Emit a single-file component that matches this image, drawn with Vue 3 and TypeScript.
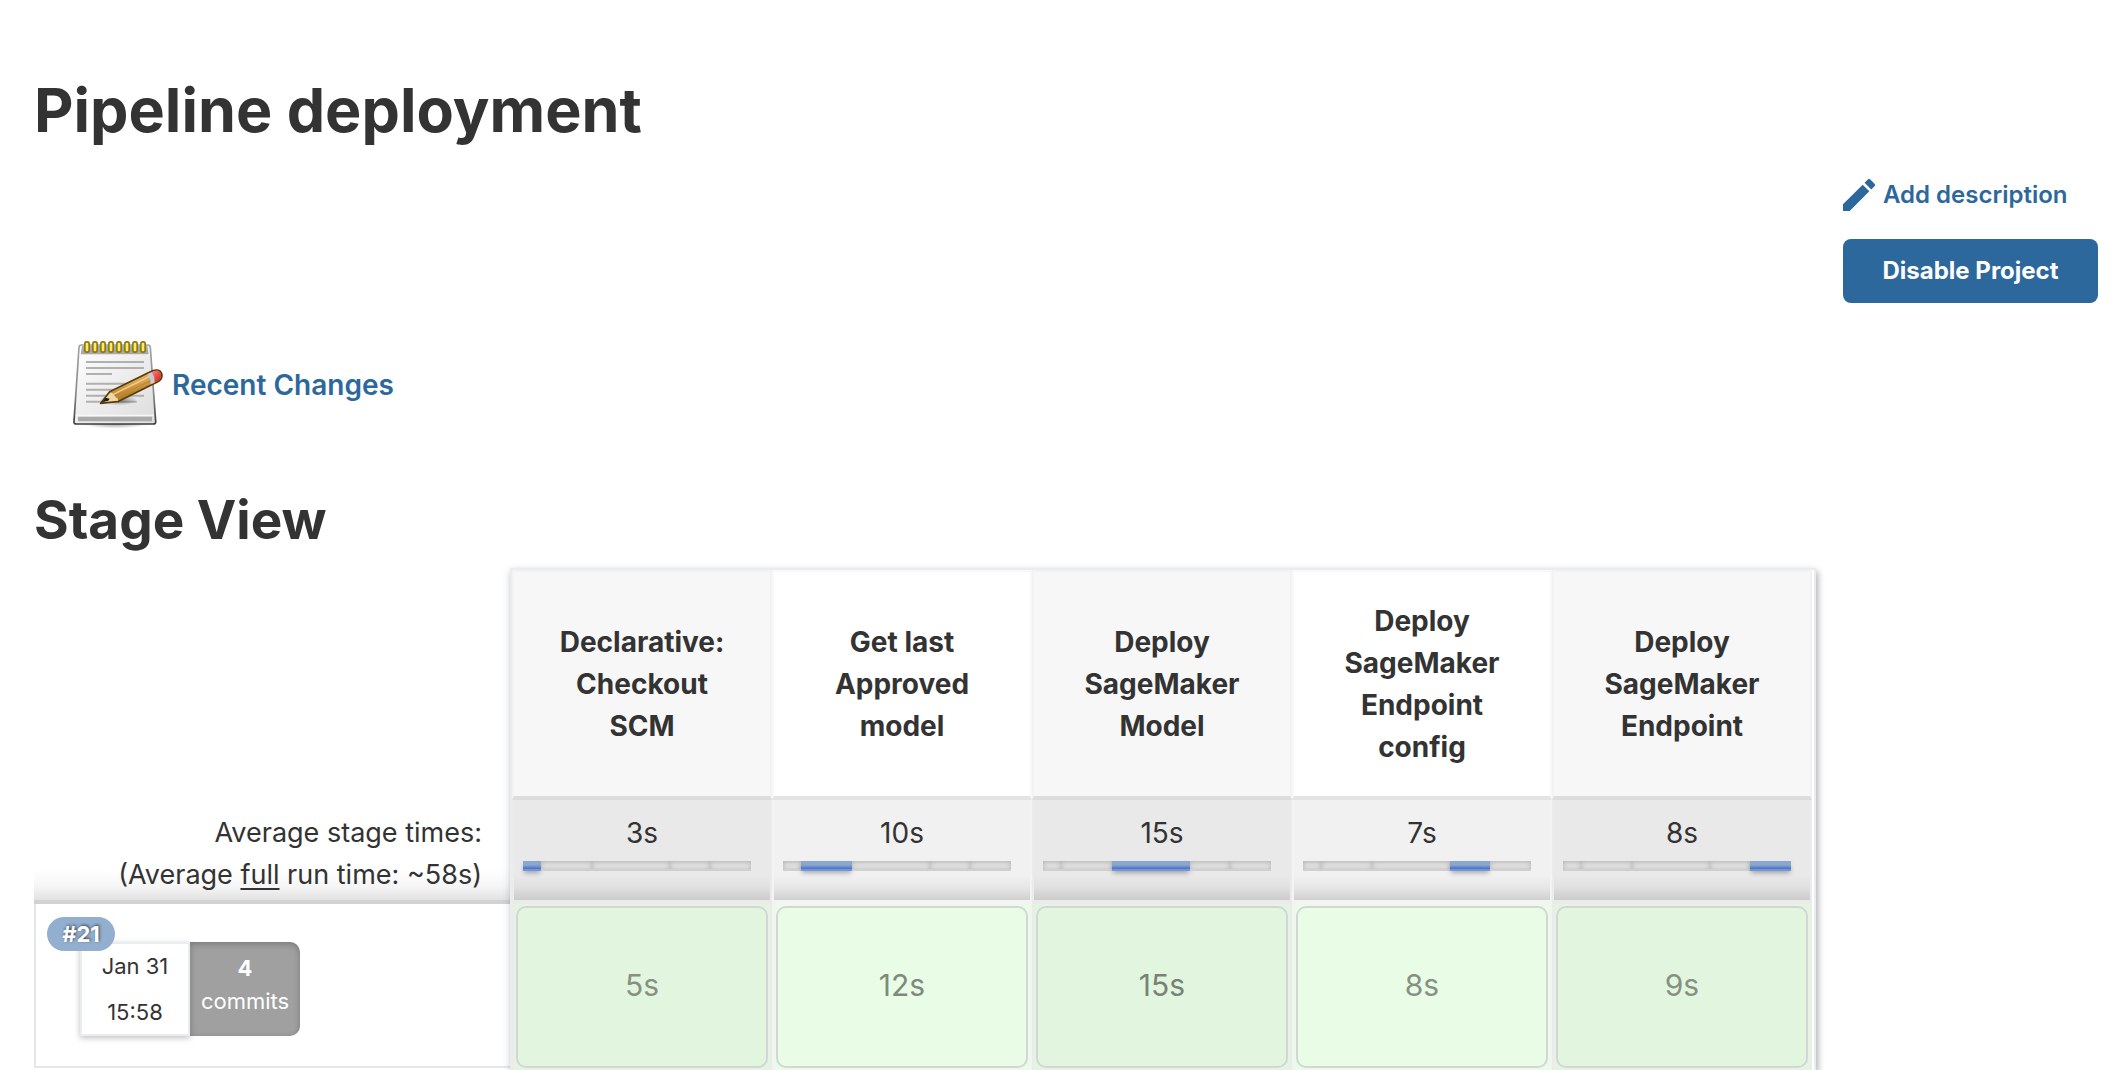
<script setup lang="ts">
interface Stage {
  name: string
  average: string
  share: number
  latest: string
  scale: 'short' | 'medium' | 'long'
}

const stages: Stage[] = [
  { name: 'Declarative: Checkout SCM', average: '3s', share: 18, latest: '5s', scale: 'short' },
  { name: 'Get last Approved model', average: '10s', share: 51, latest: '12s', scale: 'medium' },
  { name: 'Deploy SageMaker Model', average: '15s', share: 78, latest: '15s', scale: 'long' },
  { name: 'Deploy SageMaker Endpoint config', average: '7s', share: 40, latest: '8s', scale: 'short' },
  { name: 'Deploy SageMaker Endpoint', average: '8s', share: 41, latest: '9s', scale: 'short' },
]

const rings = [72, 96, 120, 144, 168, 192, 216, 240]
</script>

<template>
  <main class="page">
    <h1>Pipeline deployment</h1>

    <div class="actions">
      <div class="actions-inner">
        <a class="describe" href="#">
          <svg viewBox="3 3 18 18" width="32" height="32" aria-hidden="true">
            <path
              fill="currentColor"
              d="M3 17.25V21h3.75L17.81 9.94l-3.75-3.75L3 17.25zM20.71 7.04a1 1 0 0 0 0-1.41l-2.34-2.34a1 1 0 0 0-1.41 0l-1.83 1.83 3.75 3.75 1.83-1.83z"
            />
          </svg>
          <span>Add description</span>
        </a>
        <button class="disable" type="button">Disable Project</button>
      </div>
    </div>

    <a class="changes" href="#">
      <svg viewBox="30 21 288 288" width="96" height="96" aria-hidden="true">
        <defs>
          <linearGradient id="paper" x1="0" y1="0" x2="1" y2="1">
            <stop offset="0" stop-color="#ffffff" />
            <stop offset="1" stop-color="#dcdcdc" />
          </linearGradient>
          <linearGradient id="outline" x1="0" y1="0" x2="0" y2="1">
            <stop offset="0" stop-color="#a4a4a4" />
            <stop offset="0.6" stop-color="#8a8a8a" />
            <stop offset="1" stop-color="#3c3c3c" />
          </linearGradient>
          <linearGradient id="wood" x1="0" y1="0" x2="0.35" y2="1">
            <stop offset="0.2" stop-color="#e9b96e" />
            <stop offset="0.5" stop-color="#d9a453" />
            <stop offset="0.8" stop-color="#b5802c" />
          </linearGradient>
          <linearGradient id="rubber" x1="0" y1="0" x2="1" y2="1">
            <stop offset="0.1" stop-color="#ff7d7d" />
            <stop offset="0.8" stop-color="#d92b2b" />
          </linearGradient>
          <radialGradient id="shade">
            <stop offset="0" stop-color="#000" stop-opacity="0.45" />
            <stop offset="1" stop-color="#000" stop-opacity="0" />
          </radialGradient>
        </defs>
        <ellipse cx="165" cy="278" rx="105" ry="18" fill="url(#shade)" />
        <path
          d="M64 45H264Q270 45 271 52L287 274Q288 282 280 282H49Q41 282 42 274L57 52Q58 45 64 45Z"
          fill="url(#paper)"
          stroke="url(#outline)"
          stroke-width="5"
        />
        <path d="M66 48H262L266 74H62Z" fill="#a9a9a9" />
        <path d="M58 74H270" stroke="#fff" stroke-width="2" />
        <path d="M47 256H282" stroke="#f8f8f8" stroke-width="4" />
        <path d="M54 260H276V274H54Z" fill="#aaa" />
        <path
          d="M78 96H252M78 114H252M78 132H156M78 161H220M78 179H200M78 197H252M78 215H230"
          stroke="#b0b0b0"
          stroke-width="6"
        />
        <g v-for="x in rings" :key="x">
          <rect :x="x" y="33" width="18" height="36" rx="8" fill="#8f7714" />
          <rect :x="x + 5" y="38" width="8" height="26" rx="3" fill="#fbea68" />
        </g>
        <ellipse cx="175" cy="210" rx="56" ry="17" fill="url(#shade)" />
        <path
          d="M122 220L149 185L268 127Q288 116 300 123Q310 134 303 147Q300 152 292 156L176 214Z"
          fill="url(#wood)"
          stroke="#573c0a"
          stroke-width="5"
          stroke-linejoin="round"
        />
        <path d="M127 216L151 188Q162 188 164 199Q174 202 174 212Z" fill="#f0d9a4" />
        <path d="M125 217L137 203L149 206L145 212Z" fill="#1c1c1c" />
        <path d="M160 193L268 140" stroke="#f3ce8c" stroke-width="4" />
        <path d="M168 203L274 151" stroke="#c08a35" stroke-width="4" />
        <path d="M262 133L275 127Q285 140 284 158L272 163Q273 146 262 133Z" fill="#c9c9cf" />
        <path
          d="M275 127Q292 117 299 125Q307 136 299 147Q296 151 284 157Q285 140 275 127Z"
          fill="url(#rubber)"
        />
      </svg>
      <span>Recent Changes</span>
    </a>

    <h2>Stage View</h2>

    <div class="stage-view">
      <table>
        <thead>
          <tr class="names">
            <td class="side"></td>
            <th v-for="stage in stages" :key="stage.name" scope="col">{{ stage.name }}</th>
          </tr>
        </thead>
        <tbody>
          <tr class="averages">
            <th class="side" scope="row">
              Average stage times:<br />(Average <u>full</u> run time: ~58s)
            </th>
            <td v-for="(stage, i) in stages" :key="stage.name">
              <div class="time">{{ stage.average }}</div>
              <div class="bar">
                <span
                  v-for="(part, j) in stages"
                  :key="part.name"
                  :class="{ active: i === j }"
                  :style="{ flexGrow: part.share }"
                ></span>
              </div>
            </td>
          </tr>
          <tr class="run">
            <th class="side" scope="row">
              <div class="run-box">
                <span class="badge">#21</span>
                <div class="started">
                  <span>Jan 31</span>
                  <span>15:58</span>
                </div>
                <div class="commits">
                  <b>4</b>
                  <span>commits</span>
                </div>
              </div>
            </th>
            <td v-for="stage in stages" :key="stage.name">
              <div class="result" :class="stage.scale"><span>{{ stage.latest }}</span></div>
            </td>
          </tr>
        </tbody>
      </table>
    </div>
  </main>
</template>

<style>
body {
  margin: 0;
  background: #fff;
}
</style>

<style scoped>
.page {
  box-sizing: border-box;
  padding: 74px 30px 0 34px;
  font-family: Inter, 'Liberation Sans', sans-serif;
  font-size: 28px;
  line-height: 42px;
  color: #333;
}

h1,
h2 {
  margin: 0;
  font-weight: 700;
}

h1 {
  font-size: 61px;
  line-height: 72px;
}

h2 {
  margin: 55px 0 16px;
  font-size: 53px;
  line-height: 64px;
}

a {
  color: #2c689c;
  text-decoration: none;
  font-weight: 600;
}

.actions {
  display: flex;
  justify-content: flex-end;
  margin: 33px 0 34px;
}

.actions-inner {
  display: flex;
  flex-direction: column;
  gap: 28px;
}

.describe {
  display: flex;
  align-items: center;
  gap: 8px;
  font-size: 24px;
  line-height: 32px;
}

.disable {
  width: 255px;
  height: 64px;
  padding: 0;
  border: 0;
  border-radius: 8px;
  background: #2c689c;
  color: #fff;
  font: 700 24px/32px Inter, 'Liberation Sans', sans-serif;
}

.changes {
  display: flex;
  width: max-content;
  align-items: center;
  gap: 6px;
  margin-left: 36px;
}

.changes svg,
.describe svg {
  display: block;
}

.stage-view {
  position: relative;
  width: max-content;
  padding: 2px 4px 0 0;
}

/* Raised frame around the stage columns; it casts its shadow over the run column too. */
.stage-view::after {
  content: '';
  position: absolute;
  inset: 0 0 0 476px;
  border: 2px solid #e9edf0;
  border-bottom: 0;
  box-shadow:
    0 2px 8px rgba(0, 0, 0, 0.16),
    3px 4px 6px rgba(0, 0, 0, 0.18);
  clip-path: inset(-8px -16px 0 -16px);
  pointer-events: none;
}

table {
  table-layout: fixed;
  width: 1778px;
  border-collapse: separate;
  border-spacing: 0;
}

th,
td {
  box-sizing: border-box;
  width: 260px;
  padding: 0;
  text-align: center;
}

.side {
  width: 478px;
  font-weight: 400;
}

.names th {
  height: 230px;
  padding: 0 40px;
  border: 2px solid #f8f8f8;
  border-bottom: 4px solid #e3e3e3;
  vertical-align: middle;
  font-weight: 700;
}

.names th:nth-child(even) {
  border-color: #f1f2f2 #f1f2f2 #dcdcdc;
  background: #f7f7f7;
}

.averages th,
.averages td {
  height: 104px;
  vertical-align: top;
}

.averages .side {
  padding: 12px 30px 0 0;
  border-bottom: 4px solid #d2d2d2;
  background: linear-gradient(#fff 70px, #f6f6f6 86px, #e2e2e2 100px);
  font-size: 27px;
  text-align: right;
}

u {
  text-decoration-thickness: 2px;
  text-underline-offset: 4px;
  text-decoration-skip-ink: none;
}

.averages td {
  padding: 12px 0 0;
  border: solid #f3f3f3;
  border-width: 0 2px 4px;
  background: linear-gradient(#f1f1f1 76px, #e6e6e6 88px, #d0d0d0 100px);
}

.averages td:nth-child(even) {
  border-color: #ebebeb;
  background: linear-gradient(#e9e9e9 76px, #dfdfdf 88px, #cccccc 100px);
}

.bar {
  display: flex;
  width: 228px;
  height: 10px;
  margin: 7px 0 0 9px;
}

.bar span {
  flex: 1 1 0;
  box-sizing: border-box;
  border-bottom: 2px solid #d0d0d0;
  background: #e2e2e2;
  box-shadow: inset 0 1px 5px rgba(0, 0, 0, 0.22);
}

.bar .active {
  border-bottom-color: #7397d6;
  background: linear-gradient(#8ba8cc 50%, #6a90d0 70%, #4a6fc6);
  box-shadow: 0 3px 5px -1px rgba(0, 0, 0, 0.3);
}

.run th,
.run td {
  height: 166px;
  vertical-align: top;
}

.run-box {
  display: flex;
  box-sizing: border-box;
  height: 164px;
  padding: 38px 0 0 44px;
  border: solid #e6e6e6;
  border-width: 0 0 2px 2px;
  position: relative;
  font-size: 22px;
  line-height: 33px;
}

.badge {
  position: absolute;
  top: 13px;
  left: 11px;
  width: 68px;
  height: 34px;
  border-radius: 17px;
  background: #92afd0;
  color: #fff;
  font-weight: 700;
  line-height: 34px;
  text-shadow: 1px -1px 3px rgba(0, 0, 0, 0.6);
}

.started,
.commits {
  display: flex;
  flex-direction: column;
  box-sizing: border-box;
  width: 110px;
  height: 94px;
}

.started {
  justify-content: space-between;
  padding: 5px 0;
  border: 2px solid #e9edf0;
  box-shadow: 0 2px 6px rgba(0, 0, 0, 0.25);
  line-height: 34px;
}

.commits {
  padding-top: 10px;
  border-radius: 0 10px 10px 0;
  background: #a0a0a0;
  box-shadow: inset 0 2px 6px rgba(0, 0, 0, 0.25);
  color: #fff;
}

.run td {
  padding: 2px;
  border: solid #f3f3f3;
  border-width: 0 2px;
  background: #e9fde6;
}

.run td:nth-child(even) {
  border-color: #ebebeb;
  background: #e2f6df;
}

.result {
  display: flex;
  align-items: center;
  justify-content: center;
  box-sizing: border-box;
  height: 162px;
  padding-bottom: 4px;
  border: 2px solid #d4d5d9;
  border-radius: 10px;
  font-size: 30px;
}

.result.short {
  color: #869182;
}

.result.medium {
  color: #7f8a7d;
}

.result.long {
  color: #788276;
}
</style>
